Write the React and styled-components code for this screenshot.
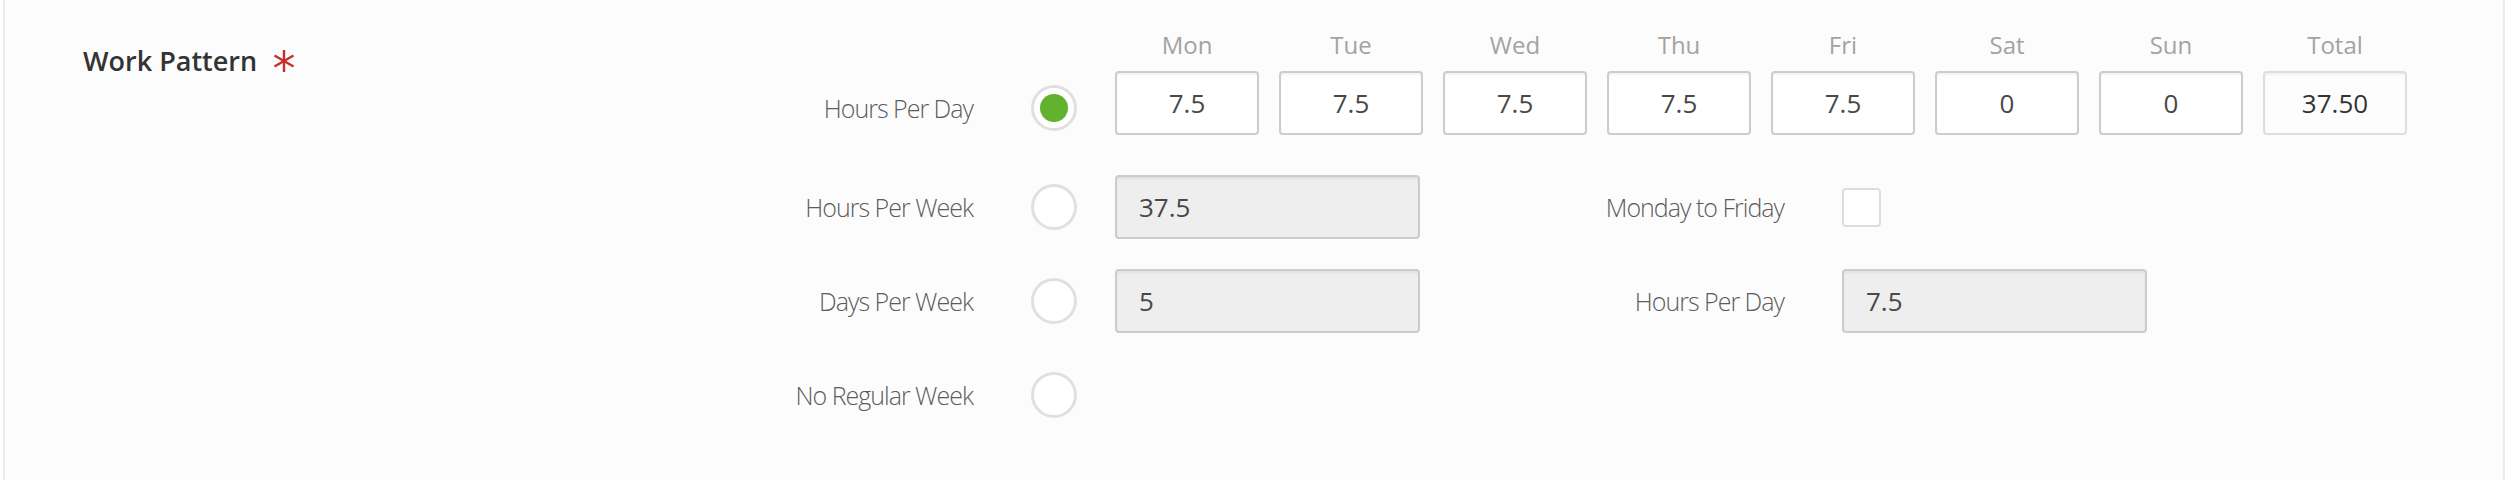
import React from 'react';
import styled, { createGlobalStyle } from 'styled-components';

const GlobalStyle = createGlobalStyle`
  html, body {
    margin: 0;
    padding: 0;
    height: 100%;
    background: #fff;
  }
  body {
    font-family: "Open Sans", "Liberation Sans", sans-serif;
  }
  #root {
    height: 100%;
  }
`;

const Panel = styled.div`
  display: flex;
  box-sizing: border-box;
  min-height: 100%;
  margin: 0 3px;
  padding: 28px 0 0 78px;
  background: #fcfcfc;
  border-left: 2px solid #ebebeb;
  border-right: 2px solid #ebebeb;
`;

const TitleCol = styled.div`
  flex: none;
  width: 617px;
  padding-top: 14px;
`;

const Title = styled.h3`
  margin: 0;
  display: flex;
  align-items: center;
  gap: 16px;
  font-size: 27px;
  font-weight: 600;
  color: #333;
`;

const Form = styled.div`
  display: flex;
  flex-direction: column;
`;

const Row = styled.div`
  display: flex;
  align-items: center;
  min-height: ${p => p.$h || 64}px;
  margin-top: ${p => p.$top || 0}px;
`;

const Lead = styled.div`
  display: flex;
  align-items: center;
  padding-top: ${p => p.$drop || 0}px;
`;

const Label = styled.label`
  width: 273px;
  text-align: right;
  font-size: 25px;
  font-weight: 300;
  letter-spacing: -1px;
  color: #5c5c5c;
  white-space: nowrap;
`;

const SideLabel = styled(Label)`
  width: 364px;
  margin-right: 58px;
`;

const Radio = styled.span`
  box-sizing: border-box;
  width: 46px;
  height: 46px;
  margin: 0 38px 0 58px;
  border-radius: 50%;
  border: 3px solid #e0e0e0;
  background: #fff;
  display: flex;
  align-items: center;
  justify-content: center;

  &::after {
    content: '';
    width: 28px;
    height: 28px;
    border-radius: 50%;
    background: ${p => (p.$checked ? '#62b22f' : 'transparent')};
  }
`;

const Spacer = styled.span`
  width: 142px;
`;

const DayGrid = styled.div`
  display: grid;
  grid-template-columns: repeat(8, 144px);
  column-gap: 20px;
`;

const DayHead = styled.div`
  text-align: center;
  font-size: 24px;
  line-height: 34px;
  color: #a3a3a3;
`;

const Field = styled.input`
  box-sizing: border-box;
  width: ${p => p.$w || 144}px;
  height: 64px;
  margin: 0;
  padding: 0 ${p => (p.$center ? 0 : 22)}px;
  border: 2px solid ${p => (p.$total ? '#dedede' : '#cccccc')};
  border-radius: 4px;
  background: ${p => (p.$off ? '#eeeeee' : p.$total ? '#fdfdfd' : '#fff')};
  box-shadow: inset 0 2px 2px rgba(0, 0, 0, 0.05);
  font-family: "Open Sans", "Liberation Sans", sans-serif;
  font-size: 26px;
  color: ${p => (p.$total ? '#333' : '#484848')};
  text-align: ${p => (p.$center ? 'center' : 'left')};
  outline: none;
`;

const Check = styled.span`
  box-sizing: border-box;
  width: 39px;
  height: 39px;
  border: 2px solid #dddddd;
  border-radius: 4px;
  background: #fff;
`;

const Asterisk = () => (
  <svg width="22" height="24" viewBox="0 0 22 24">
    <g stroke="#c62f2f" strokeWidth="2.4" strokeLinecap="butt">
      <line x1="11" y1="1" x2="11" y2="23" />
      <line x1="1.5" y1="6.5" x2="20.5" y2="17.5" />
      <line x1="20.5" y1="6.5" x2="1.5" y2="17.5" />
    </g>
  </svg>
);

const days = [
  { name: 'Mon', value: '7.5' },
  { name: 'Tue', value: '7.5' },
  { name: 'Wed', value: '7.5' },
  { name: 'Thu', value: '7.5' },
  { name: 'Fri', value: '7.5' },
  { name: 'Sat', value: '0' },
  { name: 'Sun', value: '0' },
];

export default function App() {
  return (
    <>
      <GlobalStyle />
      <Panel>
        <TitleCol>
          <Title>
            Work Pattern <Asterisk />
          </Title>
        </TitleCol>

        <Form>
          <Row $h={34}>
            <Label />
            <Spacer />
            <DayGrid>
              {days.map(d => (
                <DayHead key={d.name}>{d.name}</DayHead>
              ))}
              <DayHead>Total</DayHead>
            </DayGrid>
          </Row>

          <Row $top={9}>
            <Lead $drop={10}>
              <Label>Hours Per Day</Label>
              <Radio $checked />
            </Lead>
            <DayGrid>
              {days.map(d => (
                <Field key={d.name} $center readOnly value={d.value} />
              ))}
              <Field $center $total readOnly value="37.50" />
            </DayGrid>
          </Row>

          <Row $top={40}>
            <Label>Hours Per Week</Label>
            <Radio />
            <Field $w={305} $off readOnly value="37.5" />
            <SideLabel>Monday to Friday</SideLabel>
            <Check />
          </Row>

          <Row $top={30}>
            <Label>Days Per Week</Label>
            <Radio />
            <Field $w={305} $off readOnly value="5" />
            <SideLabel>Hours Per Day</SideLabel>
            <Field $w={305} $off readOnly value="7.5" />
          </Row>

          <Row $top={30}>
            <Label>No Regular Week</Label>
            <Radio />
          </Row>
        </Form>
      </Panel>
    </>
  );
}
